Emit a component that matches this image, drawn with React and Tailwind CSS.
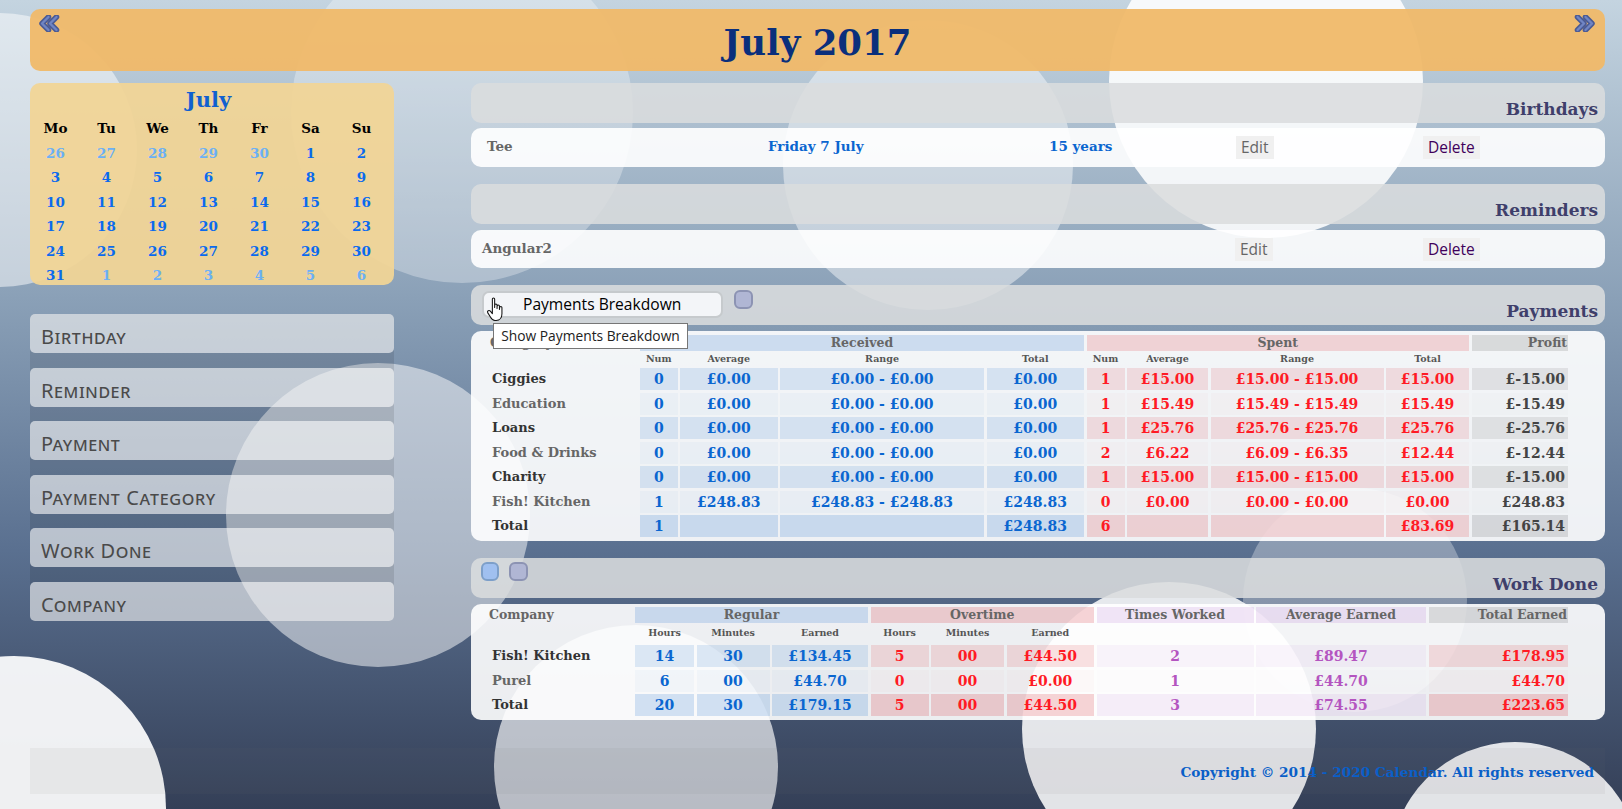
import React from "react";

const circles = [
  { x: 0, y: 150, r: 137, a: 0.5 },
  { x: 462, y: 112, r: 171, a: 0.3 },
  { x: 928, y: 165, r: 145, a: 0.45 },
  { x: 1266, y: 81, r: 157, a: 0.88 },
  { x: 378, y: 515, r: 152, a: 0.5 },
  { x: 1355, y: 600, r: 112, a: 0.3 },
  { x: 14, y: 808, r: 152, a: 0.92 },
  { x: 636, y: 767, r: 142, a: 0.65 },
  { x: 1169, y: 729, r: 147, a: 0.86 },
  { x: 1515, y: 867, r: 125, a: 0.86 },
];

const calRows = [
  [["26", 1], ["27", 1], ["28", 1], ["29", 1], ["30", 1], ["1"], ["2"]],
  [["3"], ["4"], ["5"], ["6"], ["7"], ["8"], ["9"]],
  [["10"], ["11"], ["12"], ["13"], ["14"], ["15"], ["16"]],
  [["17"], ["18"], ["19"], ["20"], ["21"], ["22"], ["23"]],
  [["24"], ["25"], ["26"], ["27"], ["28"], ["29"], ["30"]],
  [["31"], ["1", 1], ["2", 1], ["3", 1], ["4", 1], ["5", 1], ["6", 1]],
];

const payments = [
  ["Ciggies", "0", "£0.00", "£0.00 - £0.00", "£0.00", "1", "£15.00", "£15.00 - £15.00", "£15.00", "£-15.00"],
  ["Education", "0", "£0.00", "£0.00 - £0.00", "£0.00", "1", "£15.49", "£15.49 - £15.49", "£15.49", "£-15.49"],
  ["Loans", "0", "£0.00", "£0.00 - £0.00", "£0.00", "1", "£25.76", "£25.76 - £25.76", "£25.76", "£-25.76"],
  ["Food & Drinks", "0", "£0.00", "£0.00 - £0.00", "£0.00", "2", "£6.22", "£6.09 - £6.35", "£12.44", "£-12.44"],
  ["Charity", "0", "£0.00", "£0.00 - £0.00", "£0.00", "1", "£15.00", "£15.00 - £15.00", "£15.00", "£-15.00"],
  ["Fish! Kitchen", "1", "£248.83", "£248.83 - £248.83", "£248.83", "0", "£0.00", "£0.00 - £0.00", "£0.00", "£248.83"],
  ["Total", "1", "", "", "£248.83", "6", "", "", "£83.69", "£165.14"],
];

const work = [
  ["Fish! Kitchen", "14", "30", "£134.45", "5", "00", "£44.50", "2", "£89.47", "£178.95"],
  ["Purel", "6", "00", "£44.70", "0", "00", "£0.00", "1", "£44.70", "£44.70"],
  ["Total", "20", "30", "£179.15", "5", "00", "£44.50", "3", "£74.55", "£223.65"],
];

const blue = ["bg-[rgba(10,100,200,0.12)]", "bg-[rgba(10,100,200,0.03)]", "bg-[rgba(10,100,200,0.17)]"];
const red = ["bg-[rgba(215,30,40,0.12)]", "bg-[rgba(215,30,40,0.025)]", "bg-[rgba(215,30,40,0.16)]"];
const grey = ["bg-[rgba(0,0,0,0.08)]", "bg-[rgba(0,0,0,0.01)]", "bg-[rgba(0,0,0,0.11)]"];
const purple = ["bg-[rgba(150,50,190,0.05)]", "bg-[rgba(150,50,190,0.01)]", "bg-[rgba(150,50,190,0.08)]"];
const wred = ["bg-[rgba(215,30,40,0.13)]", "bg-[rgba(215,30,40,0.025)]", "bg-[rgba(215,30,40,0.19)]"];

function Chevrons({ flip }) {
  return (
    <svg width="22" height="17" viewBox="0 0 22 17" className={flip ? "-scale-x-100" : ""}>
      <path d="M9.5 2 L3 8.5 L9.5 15 M17.5 2 L11 8.5 L17.5 15" fill="none" stroke="#4a5a94" strokeWidth="5.5" strokeLinejoin="round" strokeLinecap="round" />
      <path d="M9.5 2 L3 8.5 L9.5 15 M17.5 2 L11 8.5 L17.5 15" fill="none" stroke="#7085c4" strokeWidth="2.4" strokeLinejoin="round" strokeLinecap="round" />
    </svg>
  );
}

function Hand() {
  return (
    <svg width="20" height="25" viewBox="0 0 19 24" className="absolute left-[15px] top-[12px]">
      <path d="M6 2c0-1.4 2.2-1.4 2.2 0v8l.1-2.4c0-1.3 2.2-1.3 2.2 0V11l.1-2.4c0-1.3 2.2-1.3 2.2 0V12l.2-2c0-1.3 2.2-1.3 2.2 0v6c0 3.5-2 6.5-5.5 6.5H8.500c-2 0-3.200-1.200-4.200-3L1.500 15c-.7-1.400 1.200-2.800 2.600-1.400L6 16Z" fill="#fff" stroke="#111" strokeWidth="1" strokeLinejoin="round" />
    </svg>
  );
}

function SectionHeader({ title, children }) {
  return (
    <div className="relative h-[40px] rounded-[10px] bg-[rgba(218,220,222,0.87)]">
      {children}
      <div className="absolute right-[7px] bottom-[2px] text-[17px] leading-[24px] font-bold text-[#3f3f6b]">{title}</div>
    </div>
  );
}

function ActionButton({ color, children }) {
  return (
    <span className={`font-['Open_Sans',sans-serif] inline-block h-[23px] bg-[#f0f0f0] px-[5px] text-[15.500px] font-normal leading-[23px] ${color}`}>{children}</span>
  );
}

function PayRow({ r, i }) {
  const k = r[0] === "Total" ? 2 : i % 2;
  const nameColor = i % 2 === 0 ? "text-[#333]" : "text-[#666]";
  const cell = "flex items-center justify-center";
  return (
    <div className="grid h-[22px] grid-cols-[157.5px_37.5px_97.5px_204px_97.5px_38px_81px_173px_83px_96.5px] gap-x-[2.5px] text-[14px] leading-[22px] font-bold">
      <div className={`pl-[12px] text-[13px] ${nameColor}`}>{r[0]}</div>
      {[1, 2, 3, 4].map((c) => (
        <div key={c} className={`${cell} text-[#0a66d0] ${blue[k]}`}>{r[c]}</div>
      ))}
      {[5, 6, 7, 8].map((c) => (
        <div key={c} className={`${cell} text-[#ff1a24] ${red[k]}`}>{r[c]}</div>
      ))}
      <div className={`flex items-center justify-end pr-[3px] text-[#444] ${grey[k]}`}>{r[9]}</div>
    </div>
  );
}

function WorkRow({ r, i }) {
  const k = r[0] === "Total" ? 2 : i % 2;
  const nameColor = i % 2 === 0 ? "text-[#333]" : "text-[#666]";
  const cell = "flex items-center justify-center";
  return (
    <div className="grid h-[22px] grid-cols-[152.5px_59px_73px_96px_58px_73px_87.5px_157px_170px_139.5px] gap-x-[2.5px] text-[14px] leading-[22px] font-bold">
      <div className={`pl-[12px] text-[13px] ${nameColor}`}>{r[0]}</div>
      {[1, 2, 3].map((c) => (
        <div key={c} className={`${cell} text-[#0a66d0] ${blue[k]}`}>{r[c]}</div>
      ))}
      {[4, 5, 6].map((c) => (
        <div key={c} className={`${cell} text-[#ff1a24] ${wred[k]}`}>{r[c]}</div>
      ))}
      {[7, 8].map((c) => (
        <div key={c} className={`${cell} text-[#b455c0] ${purple[k]}`}>{r[c]}</div>
      ))}
      <div className={`flex items-center justify-end pr-[3px] text-[#ff1a24] ${wred[k]}`}>{r[9]}</div>
    </div>
  );
}

export default function App() {
  return (
    <div className="relative h-[809px] w-full overflow-hidden bg-[linear-gradient(to_bottom,#c4d4e0_0%,#8aa0b7_37%,#5a7090_68%,#343f57_100%)] font-['DejaVu_Serif',serif]">
      {circles.map((c, i) => (
        <div
          key={i}
          className="absolute rounded-full bg-white blur-[0.6px]"
          style={{ left: c.x - c.r, top: c.y - c.r, width: c.r * 2, height: c.r * 2, opacity: c.a }}
        />
      ))}

      <div className="relative w-[1575px] ml-[30px] pt-[9px]">
        <header className="relative flex h-[62px] items-center justify-center rounded-[10px] bg-[rgba(240,185,105,0.95)]">
          <div className="absolute left-[9px] top-[6px]"><Chevrons /></div>
          <div className="absolute right-[10px] top-[6px]"><Chevrons flip /></div>
          <h1 className="mt-[5px] text-[35.500px] font-bold leading-[50px] text-[#0a2f7c]">July 2017</h1>
        </header>

        <div className="mt-[12px] flex gap-[77px]">
          <aside className="w-[364px] shrink-0">
            <div className="h-[202px] overflow-hidden rounded-[10px] bg-[rgba(241,212,150,0.94)]">
              <div className="w-[357px] text-center text-[21px] font-bold leading-[33px] text-[#1060d0]">July</div>
              <div className="grid w-[357px] grid-cols-7 auto-rows-[24.5px] text-center text-[13.500px] font-bold leading-[24.5px]">
                {["Mo", "Tu", "We", "Th", "Fr", "Sa", "Su"].map((d) => (
                  <div key={d} className="text-black">{d}</div>
                ))}
                {calRows.flat().map(([d, other], i) => (
                  <div key={i} className={other ? "text-[#6bb0f5]" : "text-[#0a6aee]"}>{d}</div>
                ))}
              </div>
            </div>

            <nav className="mt-[29px] flex flex-col gap-[14.6px] rounded-[5px] bg-[rgba(0,0,0,0.1)]">
              {["Birthday", "Reminder", "Payment", "Payment Category", "Work Done", "Company"].map((t) => (
                <div key={t} className="h-[39px] rounded-[5px] bg-[rgba(255,255,255,0.6)] pl-[11px] pt-[9px] font-['Noto_Sans',sans-serif] text-[20px] leading-[27px] tracking-[0.6px] text-[#4a4a4a] [font-variant-caps:small-caps]">
                  {t}
                </div>
              ))}
            </nav>
          </aside>

          <main className="w-[1134px]">
            <SectionHeader title="Birthdays" />
            <div className="mt-[5px] grid h-[39px] grid-cols-[297px_281px_187px_187px_1fr] items-start rounded-[10px] bg-[rgba(255,255,255,0.9)] pt-[8px] text-[13.500px] font-bold leading-[20px]">
              <div className="pl-[16px] text-[#666]">Tee</div>
              <div className="text-[#0a66d0]">Friday 7 July</div>
              <div className="text-[#0a66d0]">15 years</div>
              <div><ActionButton color="text-[#666]">Edit</ActionButton></div>
              <div><ActionButton color="text-[#40005a]">Delete</ActionButton></div>
            </div>

            <div className="mt-[17px]"><SectionHeader title="Reminders" /></div>
            <div className="mt-[6px] grid h-[38px] grid-cols-[764px_188px_1fr] items-start rounded-[10px] bg-[rgba(255,255,255,0.9)] pt-[8px] text-[13.500px] font-bold leading-[20px]">
              <div className="pl-[11px] text-[#666]">Angular2</div>
              <div><ActionButton color="text-[#666]">Edit</ActionButton></div>
              <div><ActionButton color="text-[#40005a]">Delete</ActionButton></div>
            </div>

            <div className="relative z-10 mt-[17px]">
              <SectionHeader title="Payments">
                <div className="flex items-start gap-[11px] pl-[11px] pt-[6px]">
                  <div className="h-[27px] w-[241px] rounded-[7px] border-2 border-[#c6cacd] bg-[#f3f5f8] pl-[39px] font-['Open_Sans',sans-serif] text-[15.600px] font-normal leading-[23px] text-black">
                    Payments Breakdown
                  </div>
                  <div className="h-[19px] w-[19px] -translate-y-px rounded-[6px] border-2 border-[#8c93b3] bg-[#b0b6d4]" />
                </div>
                <Hand />
                <div className="absolute left-[22px] top-[38px] h-[26px] w-[195px] border border-[#767676] bg-white text-center font-['Open_Sans',sans-serif] text-[13.800px] font-normal leading-[24px] text-[#222]">
                  Show Payments Breakdown
                </div>
              </SectionHeader>
            </div>

            <section className="mt-[6px] h-[210px] rounded-[10px] bg-[rgba(255,255,255,0.9)] pl-[9px] pt-[4px]">
              <div className="grid h-[16px] grid-cols-[157.5px_444px_382.5px_96.5px] gap-x-[2.5px] text-[12.500px] font-bold leading-[16px] text-[#666]">
                <div className="pl-[10px]">Category</div>
                <div className="bg-[rgba(10,100,200,0.17)] text-center">Received</div>
                <div className="bg-[rgba(215,30,40,0.16)] text-center">Spent</div>
                <div className="bg-[rgba(0,0,0,0.11)] pr-px text-right">Profit</div>
              </div>
              <div className="grid h-[17px] grid-cols-[157.5px_37.5px_97.5px_204px_97.5px_38px_81px_173px_83px_96.5px] gap-x-[2.5px] text-center text-[9.500px] font-bold leading-[16px] text-[#555]">
                <div />
                <div>Num</div><div>Average</div><div>Range</div><div>Total</div>
                <div>Num</div><div>Average</div><div>Range</div><div>Total</div>
                <div />
              </div>
              <div className="flex flex-col gap-[2.5px]">
                {payments.map((r, i) => <PayRow key={i} r={r} i={i} />)}
              </div>
            </section>

            <div className="mt-[17px]">
              <SectionHeader title="Work Done">
                <div className="flex gap-[10px] pl-[10px] pt-[4px]">
                  <div className="h-[19px] w-[18px] rounded-[6px] border-2 border-[#7d9fc9] bg-[#a0c0f0]" />
                  <div className="h-[19px] w-[19px] rounded-[6px] border-2 border-[#8c93b3] bg-[#b0b6d4]" />
                </div>
              </SectionHeader>
            </div>

            <section className="mt-[6px] h-[116px] rounded-[10px] bg-[rgba(255,255,255,0.9)] pl-[9px] pt-[3px]">
              <div className="grid h-[16px] grid-cols-[152.5px_233px_223.500px_157px_170px_139.5px] gap-x-[2.5px] text-[12.500px] font-bold leading-[16px] text-[#666]">
                <div className="pl-[9px]">Company</div>
                <div className="bg-[rgba(10,100,200,0.17)] text-center">Regular</div>
                <div className="bg-[rgba(215,30,40,0.19)] text-center">Overtime</div>
                <div className="bg-[rgba(150,50,190,0.12)] text-center">Times Worked</div>
                <div className="bg-[rgba(150,50,190,0.12)] text-center">Average Earned</div>
                <div className="bg-[rgba(0,0,0,0.11)] pr-px text-right">Total Earned</div>
              </div>
              <div className="grid h-[22px] grid-cols-[152.5px_59px_73px_96px_58px_73px_87.5px_157px_170px_139.5px] gap-x-[2.5px] text-center text-[9.500px] font-bold leading-[20px] text-[#555]">
                <div />
                <div>Hours</div><div>Minutes</div><div>Earned</div>
                <div>Hours</div><div>Minutes</div><div>Earned</div>
              </div>
              <div className="flex flex-col gap-[2.5px]">
                {work.map((r, i) => <WorkRow key={i} r={r} i={i} />)}
              </div>
            </section>
          </main>
        </div>

        <footer className="mt-[28px] flex h-[46px] items-end justify-end bg-[rgba(115,115,115,0.07)] pb-[12px] pr-[11px] text-[13.650px] font-bold leading-[20px] text-[#0a5fc8]">
          Copyright © 2014 - 2020 Calendar. All rights reserved
        </footer>
      </div>
    </div>
  );
}
